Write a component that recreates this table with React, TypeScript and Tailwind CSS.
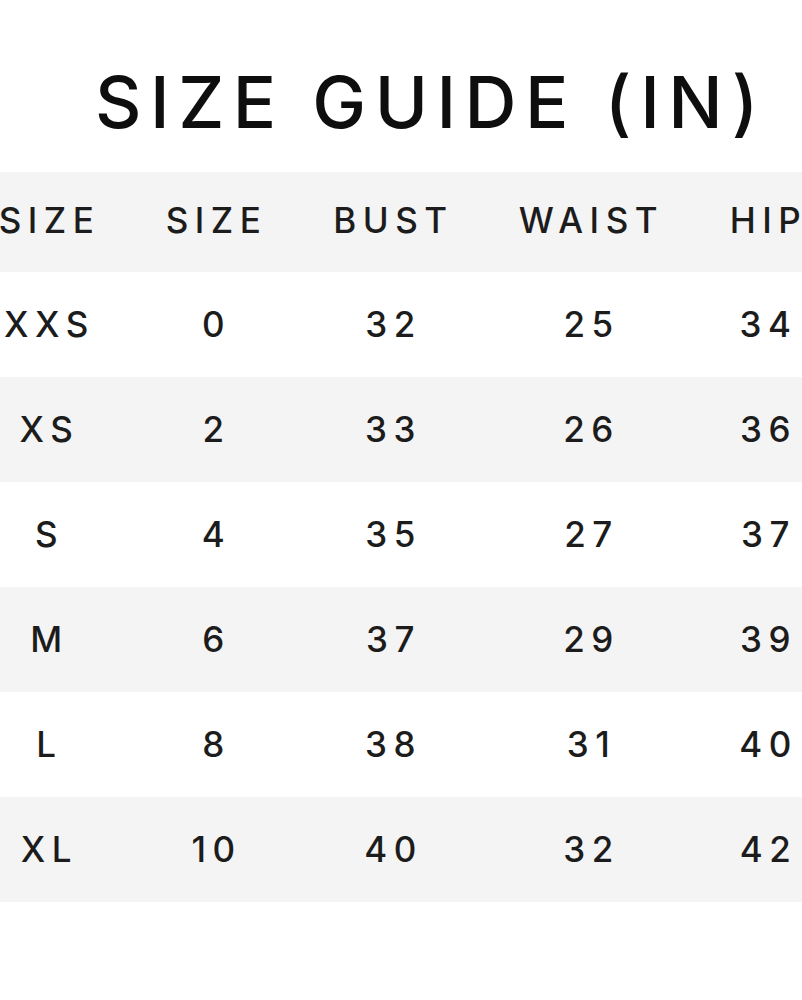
import React from "react";

const rows = [
  ["XXS", "0", "32", "25", "34"],
  ["XS", "2", "33", "26", "36"],
  ["S", "4", "35", "27", "37"],
  ["M", "6", "37", "29", "39"],
  ["L", "8", "38", "31", "40"],
  ["XL", "10", "40", "32", "42"],
];

const widths = ["w-[172px]", "w-[162px]", "w-[192px]", "w-[204px]", "w-[150px]"];

function Row({ cells, gray, header }: { cells: string[]; gray: boolean; header?: boolean }) {
  return (
    <div className={`flex items-center ml-[-40px] ${header ? "h-[100px] pb-[3px]" : "h-[105px]"} ${gray ? "bg-[#f5f4f4]" : "bg-white"}`}>
      {cells.map((c, i) => (
        <div key={i} className={`${widths[i]} shrink-0 text-center pl-[7px]`}>
          {c}
        </div>
      ))}
    </div>
  );
}

export default function App() {
  return (
    <div
      className="w-[802px] h-[1000px] bg-white overflow-hidden text-[#1c1c1c]"
      style={{ fontFamily: "Inter, 'Noto Sans', sans-serif" }}
    >
      <div className="pt-[62px] h-[172px] pl-[95px]">
        <h1 className="text-[72px] leading-[80px] font-medium tracking-[8.5px] text-[#0e0e0e] whitespace-nowrap">
          SIZE GUIDE (IN)
        </h1>
      </div>
      <div className="text-[35px] font-medium tracking-[6.5px]">
        <Row header gray cells={["SIZE", "SIZE", "BUST", "WAIST", "HIP"]} />
        {rows.map((r, i) => (
          <Row key={i} cells={r} gray={i % 2 === 1} />
        ))}
      </div>
    </div>
  );
}
